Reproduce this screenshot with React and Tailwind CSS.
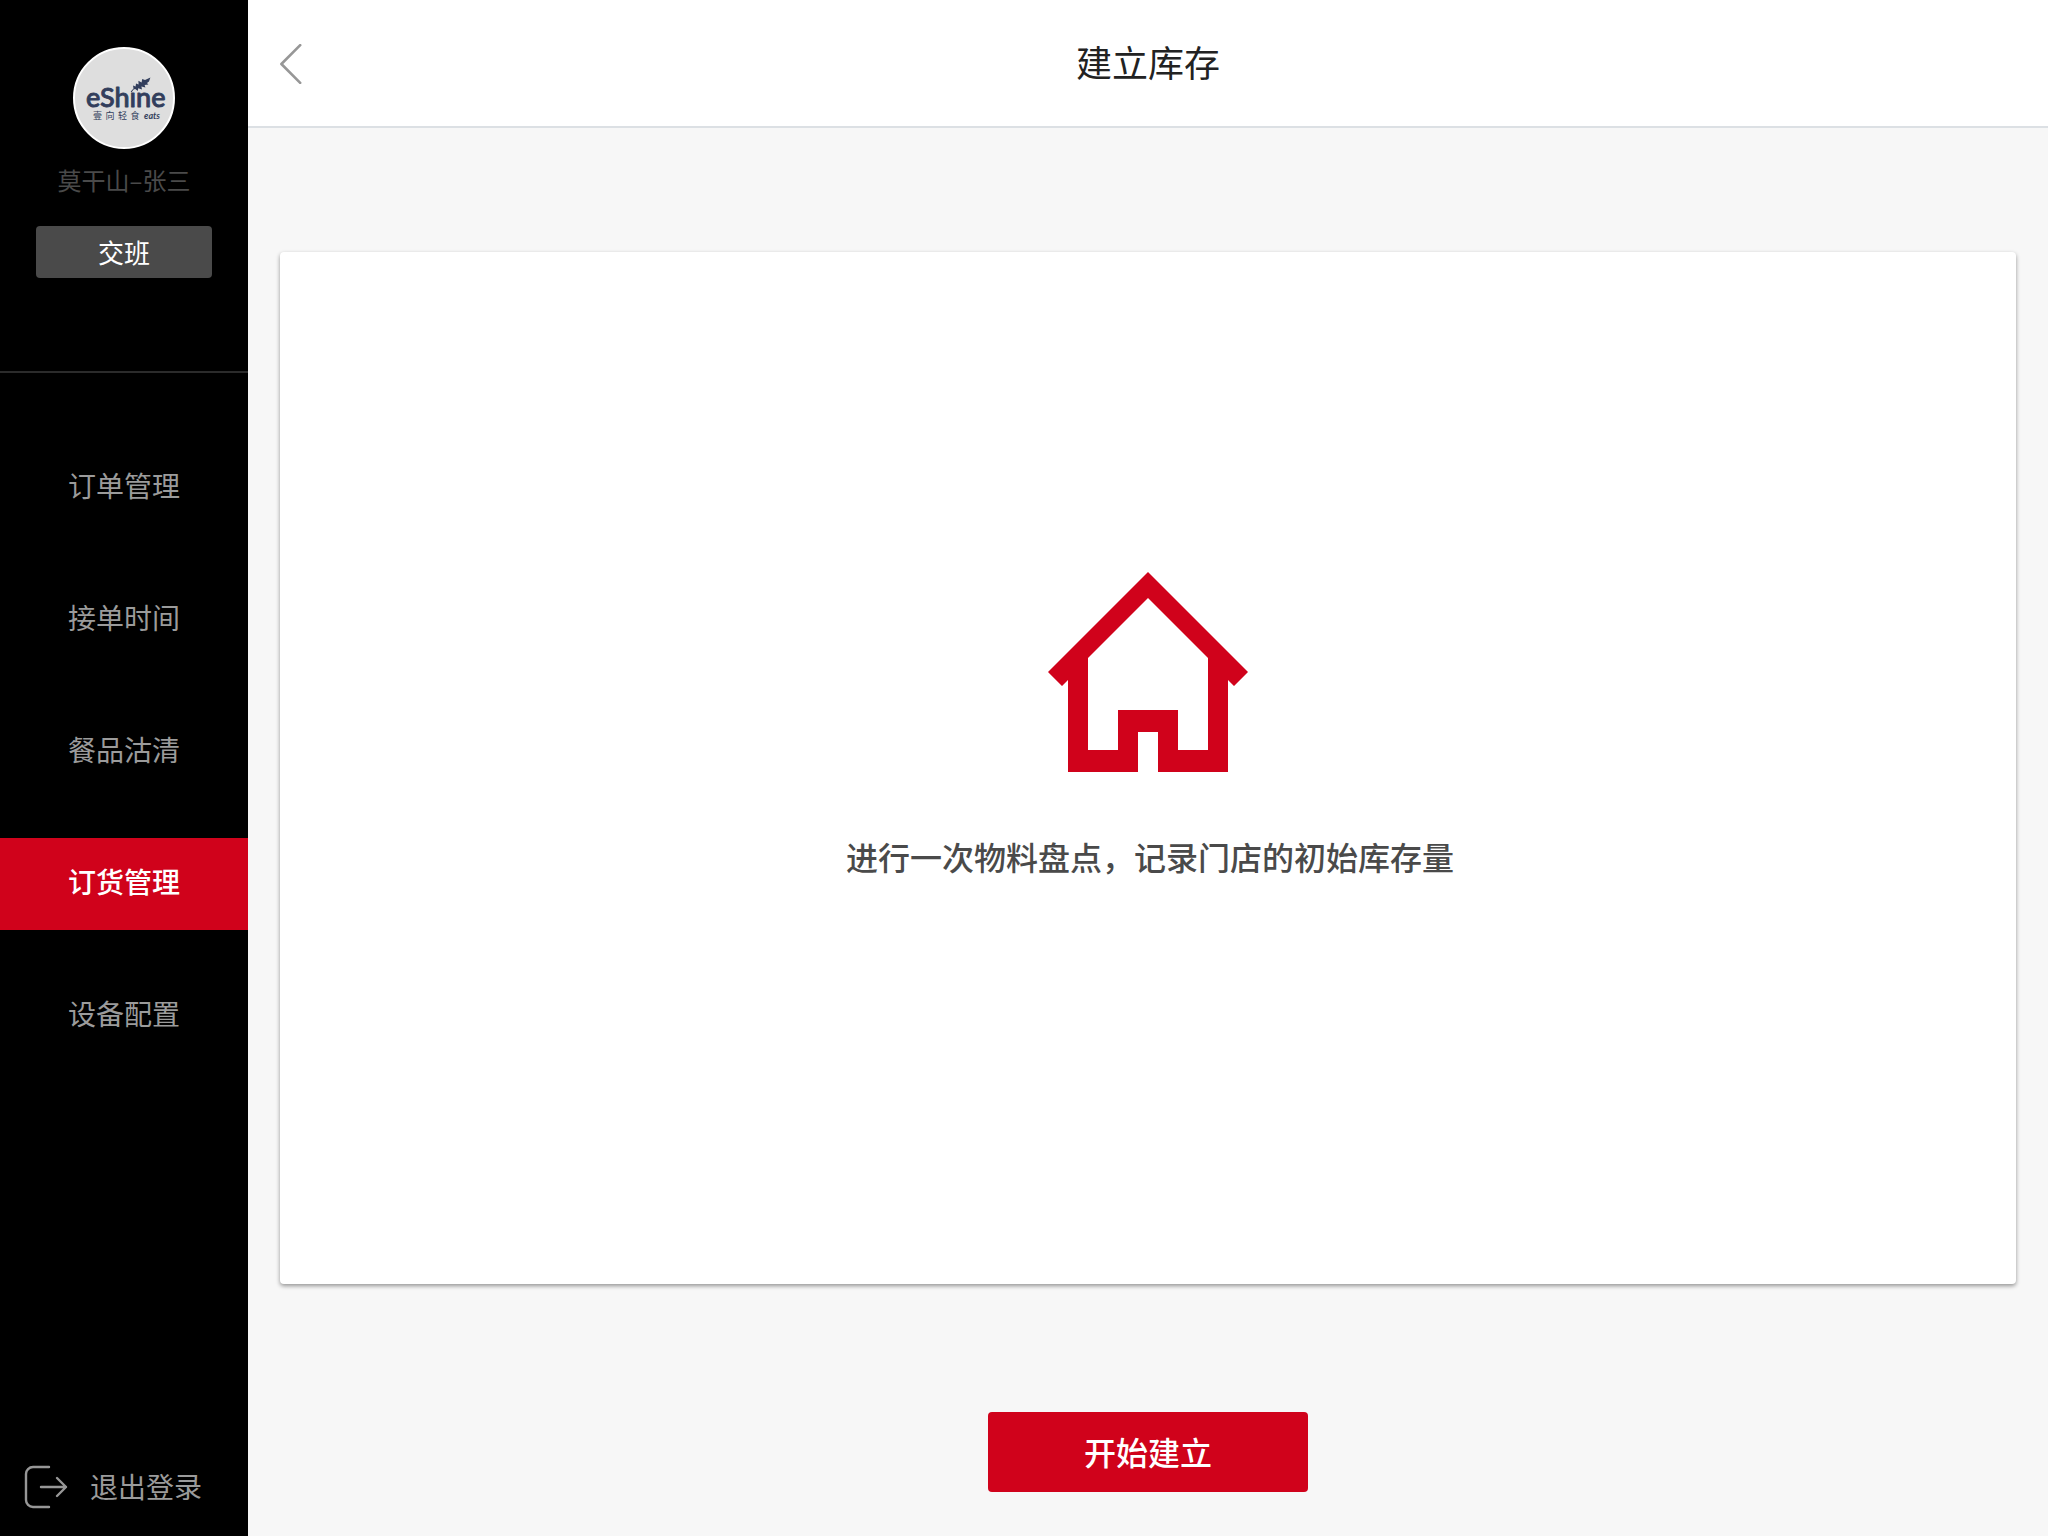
const navItems = [
  { label: "订单管理" },
  { label: "接单时间" },
  { label: "餐品沽清" },
  { label: "订货管理", active: true },
  { label: "设备配置" },
];

function BrandLogo() {
  return (
    <svg viewBox="0 0 102 102" className="size-[102px]" role="img" aria-label="eShine eats">
      <circle cx="51" cy="51" r="50" fill="#dedede" stroke="#ffffff" strokeWidth="2" />
      <g fill="#323e5c">
        <text
          x="13"
          y="60"
          fontFamily="Lato, sans-serif"
          fontSize="27"
          fontWeight="500"
          stroke="#323e5c"
          strokeWidth="0.9"
          strokeLinejoin="round"
        >
          eShıne
        </text>
        <path d="M58.4 45.5 L57.8 44.6 L60.5 41.5 L60 38.6 L62.6 39.5 L63 36.6 L65.6 37.6 L65.4 33.8 L68.6 35.4 L69.2 32 L72 33 L77.4 30.6 L76 34.4 L74 36 L75.4 37.6 L71.6 38 L72.4 40.4 L68.4 39.6 L69 42.6 L65.2 41.2 L64.8 44 L62.2 42 L60.6 42.6 Z" />
        <text x="20 32.5 45 57.5" y="72" fontFamily="'Noto Sans CJK SC', sans-serif" fontSize="9">
          壹向轻食
        </text>
        <text x="71" y="72" fontFamily="Lato, sans-serif" fontSize="9" fontStyle="italic" fontWeight="700">
          eats
        </text>
      </g>
    </svg>
  );
}

function LogoutIcon() {
  return (
    <svg
      viewBox="0 0 44 44"
      className="size-11"
      fill="none"
      stroke="#979797"
      strokeWidth="2.4"
      strokeLinecap="round"
      strokeLinejoin="round"
      aria-hidden="true"
    >
      <path d="M25 2H9a7 7 0 0 0-7 7v26a7 7 0 0 0 7 7h16" />
      <path d="M17 22H42M33 13L42 22L33 31" />
    </svg>
  );
}

function HouseIcon() {
  return (
    <svg viewBox="0 0 200 200" className="size-[200px]" fill="#d0021b" fillRule="evenodd" aria-hidden="true">
      <path d="M100 0L200 100L186 114L180 108V200H110V160H90V200H20V108L14 114L0 100ZM100 26L40 86V178H70V138H130V178H160V86Z" />
    </svg>
  );
}

function Sidebar() {
  return (
    <aside className="flex w-[248px] shrink-0 flex-col bg-black">
      <div className="flex h-[373px] flex-col items-center border-b-2 border-[#2b2b2b] pt-[47px]">
        <BrandLogo />
        <p className="mt-[15px] text-2xl/8 text-[#4a4a4a]">莫干山–张三</p>
        <button type="button" className="mt-[30px] h-[52px] w-44 rounded-sm bg-[#4a4a4a] pb-0.5 text-[26px] text-white">
          交班
        </button>
      </div>
      <nav className="mt-[69px] flex flex-col gap-10">
        {navItems.map((item) => (
          <a
            key={item.label}
            href="#"
            aria-current={item.active ? "page" : undefined}
            className={
              item.active
                ? "flex h-[92px] items-center justify-center bg-[#d0021b] pb-1.5 text-[28px] font-medium text-white"
                : "flex h-[92px] items-center justify-center pb-1.5 text-[28px] text-[#9b9b9b]"
            }
          >
            {item.label}
          </a>
        ))}
      </nav>
      <button type="button" className="mt-auto mb-[27px] ml-6 flex items-center gap-[22px] text-[28px]/[40px] text-[#9b9b9b]">
        <LogoutIcon />
        <span className="pb-0.5">退出登录</span>
      </button>
    </aside>
  );
}

export default function App() {
  return (
    <div className="flex min-h-screen bg-[#f7f7f7] font-['Noto_Sans_CJK_SC',sans-serif]">
      <Sidebar />
      <main className="flex flex-1 flex-col">
        <header className="grid h-32 grid-cols-[1fr_auto_1fr] items-center border-b-2 border-[#dce0e4] bg-white px-8">
          <button type="button" aria-label="返回" className="mt-0.5 justify-self-start">
            <svg
              viewBox="0 0 22 40"
              className="h-10 w-[22px]"
              fill="none"
              stroke="#979797"
              strokeWidth="2.6"
              strokeLinecap="round"
              aria-hidden="true"
            >
              <path d="M20.2 1.2L1.4 20L20.2 38.8" strokeLinejoin="round" />
            </svg>
          </button>
          <h1 className="pb-1 text-4xl text-[#222222]">建立库存</h1>
        </header>
        <section className="mx-8 mt-[124px] flex flex-1 flex-col items-center justify-center rounded-sm bg-white pb-[84px] shadow-[0_2px_4px_rgba(0,0,0,0.4)]">
          <HouseIcon />
          <p className="mt-[60px] pl-1 text-[32px]/[48px] font-medium text-[#4a4a4a]">进行一次物料盘点，记录门店的初始库存量</p>
        </section>
        <button
          type="button"
          className="mt-32 mb-11 h-20 w-80 self-center rounded-sm bg-[#d0021b] pb-0.5 text-[32px] font-medium text-white"
        >
          开始建立
        </button>
      </main>
    </div>
  );
}
